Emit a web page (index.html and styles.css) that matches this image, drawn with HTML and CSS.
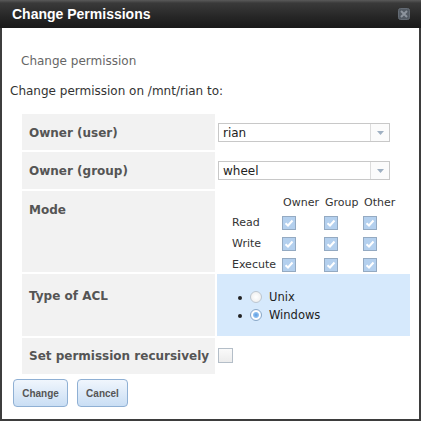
FILE: index.html
```html
<!DOCTYPE html>
<html>
<head>
<meta charset="utf-8">
<link rel="stylesheet" href="styles.css">
</head>
<body>
<div class="dialog">
  <div class="titlebar">
    <span class="title">Change Permissions</span>
    <svg class="close" width="12" height="12" viewBox="0 0 12 12"><rect x="0.5" y="0.5" width="11" height="11" rx="2" fill="#58606a" stroke="#6a727c"/><path d="M3 3 L9 9 M9 3 L3 9" stroke="#98a0aa" stroke-width="2"/></svg>
  </div>
  <div class="content">
    <div class="subtitle">Change permission</div>
    <div class="intro">Change permission on /mnt/rian to:</div>
    <div class="form">
      <div class="label">Owner (user)</div>
      <div class="value">
        <div class="select"><span class="sel-text">rian</span><span class="sel-arrow"><svg width="7" height="4" viewBox="0 0 7 4"><path d="M0 0 L7 0 L3.5 4 Z" fill="#9fb0c2"/></svg></span></div>
      </div>
      <div class="label">Owner (group)</div>
      <div class="value">
        <div class="select"><span class="sel-text">wheel</span><span class="sel-arrow"><svg width="7" height="4" viewBox="0 0 7 4"><path d="M0 0 L7 0 L3.5 4 Z" fill="#9fb0c2"/></svg></span></div>
      </div>
      <div class="label label-mode">Mode</div>
      <div class="value mode">
        <span></span><span class="hdr">Owner</span><span class="hdr">Group</span><span class="hdr">Other</span>
        <span class="rl">Read</span><span class="cb on"></span><span class="cb on"></span><span class="cb on"></span>
        <span class="rl">Write</span><span class="cb on"></span><span class="cb on"></span><span class="cb on"></span>
        <span class="rl">Execute</span><span class="cb on"></span><span class="cb on"></span><span class="cb on"></span>
      </div>
      <div class="label label-acl">Type of ACL</div>
      <div class="value acl">
        <ul>
          <li><span class="radio"></span>Unix</li>
          <li><span class="radio checked"></span>Windows</li>
        </ul>
      </div>
      <div class="label label-rec">Set permission recursively</div>
      <div class="value rec"><span class="cb"></span></div>
    </div>
    <div class="buttons">
      <button class="btn">Change</button>
      <button class="btn">Cancel</button>
    </div>
  </div>
</div>
</body>
</html>
```
FILE: styles.css
```css
html, body {
  margin: 0;
  padding: 0;
  background: #fff;
}
.dialog {
  width: 421px;
  height: 421px;
  box-sizing: border-box;
  border: 2px solid #3d3d3d;
  border-top: 0;
  background: #fff;
  font-family: "DejaVu Sans", Verdana, sans-serif;
  font-size: 12px;
  color: #333;
}
.titlebar {
  height: 28px;
  margin: 0 -2px;
  background: linear-gradient(#5a5a5a 0, #3a3a3a 3px, #262626 60%, #1a1a1a 100%);
  display: flex;
  align-items: center;
  justify-content: space-between;
  padding: 0 11px 0 12px;
  box-sizing: border-box;
}
.title {
  color: #fff;
  font-family: "Liberation Sans", Arial, sans-serif;
  font-weight: bold;
  font-size: 14px;
}
.close {
  display: block;
  opacity: 0.9;
}
.content {
  padding: 0 0 0 8px;
}
.subtitle {
  color: #666;
  margin: 26px 0 0 11px;
  line-height: 15px;
}
.intro {
  margin: 15px 0 0 0;
  line-height: 15px;
  color: #333;
}
.form {
  margin: 15px 0 0 12px;
  width: 388px;
  display: grid;
  grid-template-columns: 193px 193px;
  grid-template-rows: 36px 37px 81px 62px 36px;
  gap: 2px;
}
.label {
  background: #f2f2f2;
  font-weight: bold;
  color: #555;
  padding: 12px 0 0 7px;
  line-height: 15px;
  white-space: nowrap;
}
.label-mode { padding-top: 12px; }
.label-acl { padding-top: 15px; }
.label-rec { padding-top: 11px; }
.value {
  background: #fff;
}
.select {
  margin: 9px 0 0 1px;
  width: 172px;
  height: 19px;
  box-sizing: border-box;
  border: 1px solid #c8c8c8;
  display: flex;
  align-items: center;
  background: #fff;
}
.sel-text {
  flex: 1;
  padding-left: 4px;
  color: #222;
}
.sel-arrow {
  width: 18px;
  height: 100%;
  border-left: 1px solid #dcdcdc;
  display: flex;
  align-items: center;
  justify-content: center;
  background: #fbfbfb;
}
.sel-arrow svg { display: block; }
.mode {
  display: grid;
  font-size: 11px;
  grid-template-columns: 50px 42px 39px auto;
  grid-template-rows: 20px 21px 21px 21px;
  padding: 1px 0 0 15px;
  align-items: center;
  color: #333;
}
.mode .hdr { margin-left: 1px; }
.cb {
  display: block;
  width: 14px;
  height: 14px;
  box-sizing: border-box;
  border: 1px solid #a8b6c4;
  background: linear-gradient(#f4f4f4, #e4e4e4);
}
.cb.on {
  border-color: #94aac2;
  background: #b4d0ee url("data:image/svg+xml;utf8,<svg xmlns='http://www.w3.org/2000/svg' width='12' height='12' viewBox='0 0 12 12'><path d='M2.5 6.2 L5 8.5 L9.5 3.5' fill='none' stroke='white' stroke-width='2'/></svg>") center/12px 12px no-repeat;
}
.acl {
  background: #d6e9fc;
}
.acl ul {
  margin: 14px 0 0 0;
  padding: 0 0 0 35px;
  list-style: disc;
  color: #222;
  font-size: 11.5px;
}
.acl li {
  line-height: 18px;
}
.radio {
  display: inline-block;
  vertical-align: -2px;
  width: 12px;
  height: 12px;
  box-sizing: border-box;
  border-radius: 50%;
  border: 1px solid #bcc6d0;
  background: radial-gradient(#fff, #eaeaea);
  margin: 0 7px 0 -2px;
}
.radio.checked {
  border-color: #8aa8c8;
  background: radial-gradient(circle, #5a9ae0 0, #8fc0f0 2.5px, #ffffff 3.5px, #e8f0f8 100%);
}
.rec {
  padding: 10px 0 0 1px;
}
.rec .cb {
  width: 15px;
  height: 15px;
  border-color: #b4bec8;
  background: linear-gradient(#fafafa, #ececec);
}
.buttons {
  display: flex;
  gap: 9px;
  margin: 5px 0 0 3px;
}
.btn {
  height: 28px;
  box-sizing: border-box;
  border: 1px solid #8fb0d4;
  border-radius: 4px;
  background: linear-gradient(#f0f6fd, #c9def4);
  font-family: "Liberation Sans", Arial, sans-serif;
  font-weight: bold;
  font-size: 10px;
  color: #555;
  padding: 0;
  width: 55px;
}
.btn + .btn { width: 51px; }
```
